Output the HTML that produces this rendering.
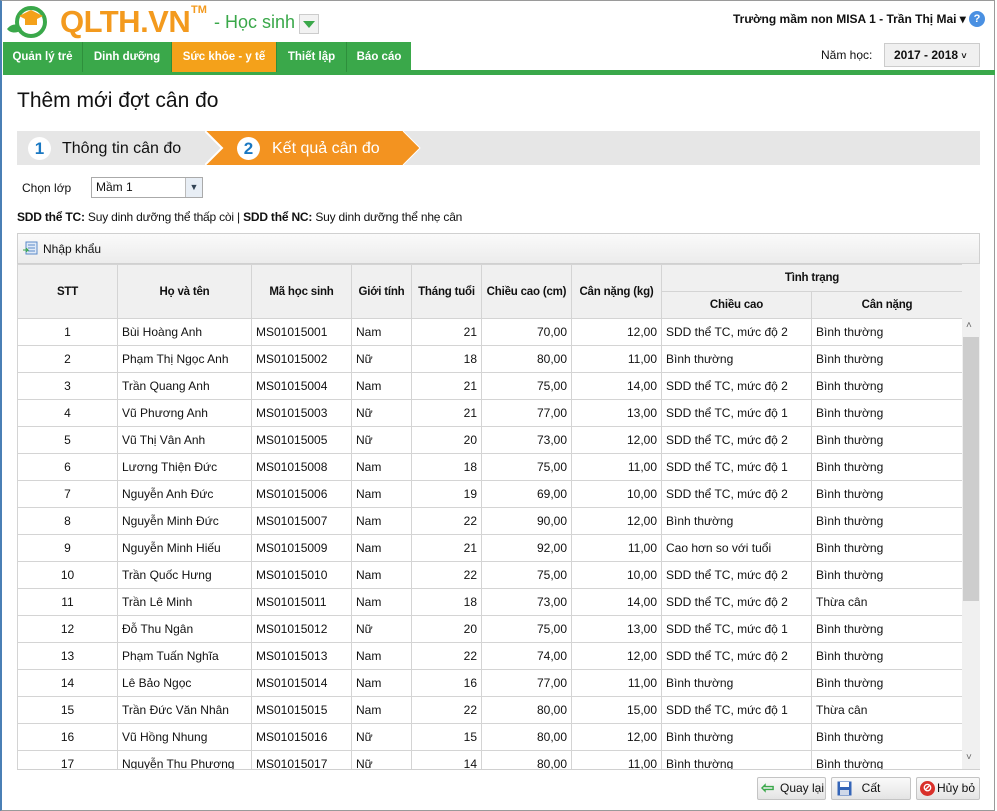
<!DOCTYPE html>
<html><head><meta charset="utf-8"><style>
*{box-sizing:border-box;margin:0;padding:0}
body{width:997px;height:811px;overflow:hidden;background:#fff;font-family:"Liberation Sans",sans-serif;font-size:12px;color:#111;position:relative}
.frame{position:absolute;left:0;top:0;width:995px;height:811px;border:1px solid #9a9a9a;border-left:2px solid #4a7fb5}
.abs{position:absolute}
.nav{position:absolute;top:42px;left:3px;height:30px;display:flex}
.nav div{color:#fff;font-weight:bold;font-size:11.5px;line-height:30px;padding:0;text-align:center;white-space:nowrap;background:#3aa84a;border-right:1px solid #2e8f3c}
.nav div.act{background:#f4a11a}
table{border-collapse:collapse;table-layout:fixed;position:absolute;left:17px;top:264px;width:945px}
td,th{border:1px solid #d4d4d4;height:27px;padding:0 4px;white-space:nowrap;overflow:hidden;font-size:12px}
th{background:#f0f0f0;font-weight:bold;font-size:11.5px;padding:0 2px;letter-spacing:-0.2px}
td.c{text-align:center}td.r{text-align:right}
.btn{position:absolute;top:777px;height:23px;border:1px solid #c4c4c4;border-radius:2px;background:linear-gradient(#fafafa,#e4e4e4);font-size:12px;line-height:21px}
</style></head><body>
<div class="frame"></div>
<svg class="abs" style="left:4px;top:3px" width="50" height="36" viewBox="0 0 50 36"><circle cx="27" cy="19" r="14" fill="none" stroke="#3aa84a" stroke-width="4"/><path d="M3 26c6-7 13-5 15 1c-6 4-12 3-15-1z" fill="#3aa84a"/><path d="M15 13l12-6 12 6-12 6z" fill="#f4a11a"/><rect x="21" y="15" width="12" height="7" fill="#f4a11a"/></svg>
<div class="abs" style="left:60px;top:4px;font-size:31px;font-weight:bold;color:#f39a1e;letter-spacing:-0.5px">QLTH.VN</div>
<div class="abs" style="left:191px;top:4px;font-size:11px;font-weight:bold;color:#f39a1e">TM</div>
<div class="abs" style="left:214px;top:12px;font-size:18px;color:#3aa84a">- Học sinh</div>
<div class="abs" style="left:299px;top:14px;width:20px;height:20px;border:1px solid #ccc;background:#f2f2f2"><div style="margin:6px 0 0 3px;border-left:6px solid transparent;border-right:6px solid transparent;border-top:7px solid #3aa84a;width:0"></div></div>
<div class="abs" style="left:733px;top:12px;font-weight:bold;font-size:12px">Trường mầm non MISA 1 - Trần Thị Mai ▾</div>
<div class="abs" style="left:969px;top:11px;width:16px;height:16px;border-radius:50%;background:#4a90e2;color:#fff;font-size:11px;font-weight:bold;text-align:center;line-height:16px">?</div>
<div class="nav"><div style="width:80px">Quản lý trẻ</div><div style="width:89px">Dinh dưỡng</div><div class="act" style="width:105px">Sức khỏe - y tế</div><div style="width:70px">Thiết lập</div><div style="width:64px;border:0">Báo cáo</div></div>
<div class="abs" style="left:410px;top:70px;width:585px;height:5px;background:#3aa84a"></div>
<div class="abs" style="left:3px;top:72px;width:407px;height:3px;background:#3aa84a"></div>
<div class="abs" style="left:821px;top:48px;font-size:12px">Năm học:</div>
<div class="abs" style="left:884px;top:43px;width:96px;height:24px;border:1px solid #ccc;background:#f0f0f0;font-weight:bold;font-size:12px;line-height:22px;padding-left:9px">2017 - 2018 <span style="font-size:9px">˅</span></div>
<div class="abs" style="left:17px;top:89px;font-size:21px">Thêm mới đợt cân đo</div>
<div class="abs" style="left:17px;top:131px;width:963px;height:34px;background:#e6e6e6"></div>
<svg class="abs" style="left:205px;top:131px" width="220" height="34"><polygon points="0,0 198,0 215,17 198,34 0,34 17,17" fill="#f39320"/><polyline points="0,0 17,17 0,34" fill="none" stroke="#fff" stroke-width="2"/><polyline points="198,0 215,17 198,34" fill="none" stroke="#fff" stroke-width="1"/></svg>
<div class="abs" style="left:28px;top:137px;width:23px;height:23px;border-radius:50%;background:#fff;color:#1a78c2;font-weight:bold;font-size:17px;text-align:center;line-height:23px">1</div>
<div class="abs" style="left:62px;top:140px;font-size:16px">Thông tin cân đo</div>
<div class="abs" style="left:237px;top:137px;width:23px;height:23px;border-radius:50%;background:#fff;color:#1a78c2;font-weight:bold;font-size:17px;text-align:center;line-height:23px">2</div>
<div class="abs" style="left:272px;top:140px;font-size:16px;color:#fff">Kết quả cân đo</div>
<div class="abs" style="left:22px;top:181px">Chọn lớp</div>
<div class="abs" style="left:91px;top:177px;width:112px;height:21px;border:1px solid #aaa;background:#fff;padding:2px 4px">Mầm 1<div style="position:absolute;right:0;top:0;width:17px;height:19px;background:#e8eef5;border-left:1px solid #bbb;text-align:center;font-size:9px;line-height:19px;color:#345">▼</div></div>
<div class="abs" style="left:17px;top:210px;letter-spacing:-0.2px"><b>SDD thể TC:</b> Suy dinh dưỡng thể thấp còi | <b>SDD thể NC:</b> Suy dinh dưỡng thể nhẹ cân</div>
<div class="abs" style="left:17px;top:233px;width:963px;height:537px;border:1px solid #d0d0d0"></div>
<div class="abs" style="left:18px;top:234px;width:961px;height:30px;background:linear-gradient(#fafafa,#ececec);border-bottom:1px solid #d0d0d0"></div>
<svg class="abs" style="left:23px;top:241px" width="15" height="15"><rect x="3" y="1" width="11" height="12" fill="#dfe9f7" stroke="#5b8ac8"/><path d="M5 4h7M5 7h7M5 10h7" stroke="#5b8ac8"/><path d="M0 9h5l-2-2M5 9l-2 2" stroke="#3aa84a" fill="none"/></svg>
<div class="abs" style="left:43px;top:242px">Nhập khẩu</div>
<div class="abs" style="left:962px;top:264px;width:18px;height:505px;background:#f0f0f0"></div>
<div class="abs" style="left:963px;top:337px;width:16px;height:264px;background:#cdcdcd"></div>
<div class="abs" style="left:966px;top:320px;font-size:10px;color:#666">˄</div>
<div class="abs" style="left:966px;top:752px;font-size:10px;color:#666">˅</div>
<div class="abs" style="left:17px;top:264px;width:945px;height:505px;overflow:hidden">
<table style="left:0;top:0">
<colgroup><col style="width:100px"><col style="width:134px"><col style="width:100px"><col style="width:60px"><col style="width:70px"><col style="width:90px"><col style="width:90px"><col style="width:150px"><col style="width:151px"></colgroup>
<tr><th rowspan="2">STT</th><th rowspan="2">Họ và tên</th><th rowspan="2">Mã học sinh</th><th rowspan="2">Giới tính</th><th rowspan="2">Tháng tuổi</th><th rowspan="2">Chiều cao (cm)</th><th rowspan="2">Cân nặng (kg)</th><th colspan="2">Tình trạng</th></tr>
<tr><th>Chiều cao</th><th>Cân nặng</th></tr>
<tr><td class="c">1</td><td>Bùi Hoàng Anh</td><td>MS01015001</td><td>Nam</td><td class="r">21</td><td class="r">70,00</td><td class="r">12,00</td><td>SDD thể TC, mức độ 2</td><td>Bình thường</td></tr>
<tr><td class="c">2</td><td>Phạm Thị Ngọc Anh</td><td>MS01015002</td><td>Nữ</td><td class="r">18</td><td class="r">80,00</td><td class="r">11,00</td><td>Bình thường</td><td>Bình thường</td></tr>
<tr><td class="c">3</td><td>Trần Quang Anh</td><td>MS01015004</td><td>Nam</td><td class="r">21</td><td class="r">75,00</td><td class="r">14,00</td><td>SDD thể TC, mức độ 2</td><td>Bình thường</td></tr>
<tr><td class="c">4</td><td>Vũ Phương Anh</td><td>MS01015003</td><td>Nữ</td><td class="r">21</td><td class="r">77,00</td><td class="r">13,00</td><td>SDD thể TC, mức độ 1</td><td>Bình thường</td></tr>
<tr><td class="c">5</td><td>Vũ Thị Vân Anh</td><td>MS01015005</td><td>Nữ</td><td class="r">20</td><td class="r">73,00</td><td class="r">12,00</td><td>SDD thể TC, mức độ 2</td><td>Bình thường</td></tr>
<tr><td class="c">6</td><td>Lương Thiện Đức</td><td>MS01015008</td><td>Nam</td><td class="r">18</td><td class="r">75,00</td><td class="r">11,00</td><td>SDD thể TC, mức độ 1</td><td>Bình thường</td></tr>
<tr><td class="c">7</td><td>Nguyễn Anh Đức</td><td>MS01015006</td><td>Nam</td><td class="r">19</td><td class="r">69,00</td><td class="r">10,00</td><td>SDD thể TC, mức độ 2</td><td>Bình thường</td></tr>
<tr><td class="c">8</td><td>Nguyễn Minh Đức</td><td>MS01015007</td><td>Nam</td><td class="r">22</td><td class="r">90,00</td><td class="r">12,00</td><td>Bình thường</td><td>Bình thường</td></tr>
<tr><td class="c">9</td><td>Nguyễn Minh Hiếu</td><td>MS01015009</td><td>Nam</td><td class="r">21</td><td class="r">92,00</td><td class="r">11,00</td><td>Cao hơn so với tuổi</td><td>Bình thường</td></tr>
<tr><td class="c">10</td><td>Trần Quốc Hưng</td><td>MS01015010</td><td>Nam</td><td class="r">22</td><td class="r">75,00</td><td class="r">10,00</td><td>SDD thể TC, mức độ 2</td><td>Bình thường</td></tr>
<tr><td class="c">11</td><td>Trần Lê Minh</td><td>MS01015011</td><td>Nam</td><td class="r">18</td><td class="r">73,00</td><td class="r">14,00</td><td>SDD thể TC, mức độ 2</td><td>Thừa cân</td></tr>
<tr><td class="c">12</td><td>Đỗ Thu Ngân</td><td>MS01015012</td><td>Nữ</td><td class="r">20</td><td class="r">75,00</td><td class="r">13,00</td><td>SDD thể TC, mức độ 1</td><td>Bình thường</td></tr>
<tr><td class="c">13</td><td>Phạm Tuấn Nghĩa</td><td>MS01015013</td><td>Nam</td><td class="r">22</td><td class="r">74,00</td><td class="r">12,00</td><td>SDD thể TC, mức độ 2</td><td>Bình thường</td></tr>
<tr><td class="c">14</td><td>Lê Bảo Ngọc</td><td>MS01015014</td><td>Nam</td><td class="r">16</td><td class="r">77,00</td><td class="r">11,00</td><td>Bình thường</td><td>Bình thường</td></tr>
<tr><td class="c">15</td><td>Trần Đức Văn Nhân</td><td>MS01015015</td><td>Nam</td><td class="r">22</td><td class="r">80,00</td><td class="r">15,00</td><td>SDD thể TC, mức độ 1</td><td>Thừa cân</td></tr>
<tr><td class="c">16</td><td>Vũ Hồng Nhung</td><td>MS01015016</td><td>Nữ</td><td class="r">15</td><td class="r">80,00</td><td class="r">12,00</td><td>Bình thường</td><td>Bình thường</td></tr>
<tr><td class="c">17</td><td>Nguyễn Thu Phương</td><td>MS01015017</td><td>Nữ</td><td class="r">14</td><td class="r">80,00</td><td class="r">11,00</td><td>Bình thường</td><td>Bình thường</td></tr>
</table></div>
<div class="btn" style="left:757px;width:69px;padding-left:22px"><span style="position:absolute;left:3px;top:0;color:#3aa84a;font-size:16px;font-weight:bold">⇦</span>Quay lại</div>
<div class="btn" style="left:831px;width:80px;text-align:center"><svg style="position:absolute;left:5px;top:3px" width="15" height="15"><rect x="0.5" y="0.5" width="14" height="14" fill="#3465b8"/><rect x="3" y="1" width="9" height="5" fill="#fff"/><rect x="3" y="9" width="9" height="5" fill="#cfd8e8"/></svg>Cất</div>
<div class="btn" style="left:916px;width:64px;padding-left:20px"><span style="position:absolute;left:3px;top:3px;width:15px;height:15px;border-radius:50%;background:#d9302a;color:#fff;font-size:11px;line-height:15px;text-align:center;font-weight:bold">⊘</span>Hủy bỏ</div>
</body></html>
